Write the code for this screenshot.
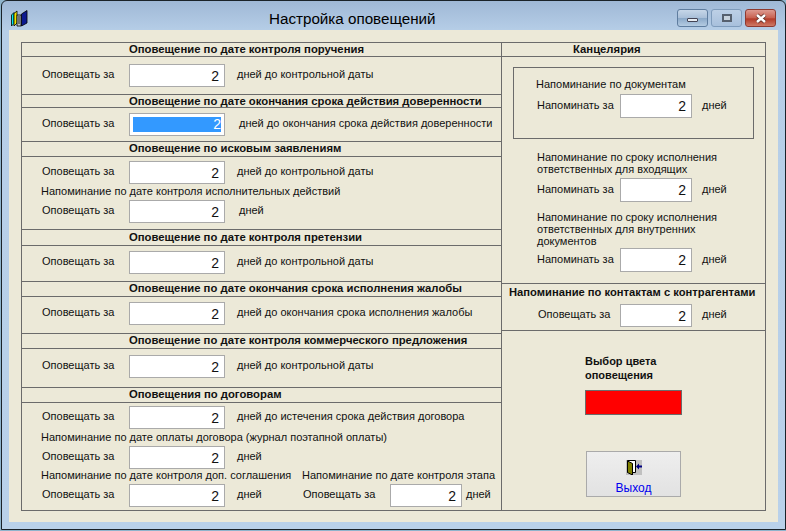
<div class="win">
  <div class="titlebar">
    <svg class="appicon" width="17" height="17" viewBox="0 0 17 17">
      <path d="M.5 5 3 2.500v11L.5 16z" fill="#00e8f0" stroke="#000" stroke-width=".8"/>
      <path d="M3 3.500 6 1v12l-3 3z" fill="#f0e400" stroke="#000" stroke-width=".8"/>
      <path d="M6 5h4v11H6z" fill="#b8c4c8" stroke="#000" stroke-width=".8"/>
      <path d="M7 7h2M7 9h2M7 11h2M7 13h2" stroke="#222" stroke-width="1"/>
      <path d="M10.500 4 16 .5v12.500l-5.500 3z" fill="#0c1a90" stroke="#000" stroke-width=".8"/>
    </svg>
    <div class="title">Настройка оповещений</div>
    <div class="controls">
      <div class="cb"><span class="min"></span></div>
      <div class="cb faint"><span class="max"></span></div>
      <div class="cb close">
        <svg width="14" height="11" viewBox="0 0 14 11"><path d="M3 2 11 9M11 2 3 9" stroke="#5a2a22" stroke-width="4"/><path d="M3 2 11 9M11 2 3 9" stroke="#fff" stroke-width="2.600"/></svg>
      </div>
    </div>
  </div>
  <div class="client">
    <div class="frame">
      <div class="left">
        <h4 class="h hh14">Оповещение по дате контроля поручения</h4>
        <div class="sec s1">
          <div class="row"><span class="lab">Оповещать за</span><span class="inp">2</span><span class="aft">дней до контрольной даты</span></div>
        </div>
        <h4 class="h">Оповещение по дате окончания срока действия доверенности</h4>
        <div class="sec s2">
          <div class="row"><span class="lab">Оповещать за</span><span class="inp sel"><b>2</b></span><span class="aft a2">дней до окончания срока действия доверенности</span></div>
        </div>
        <h4 class="h hh15">Оповещение по исковым заявлениям</h4>
        <div class="sec s3">
          <div class="row"><span class="lab">Оповещать за</span><span class="inp">2</span><span class="aft">дней до контрольной даты</span></div>
          <div class="note">Напоминание по дате контроля исполнительных действий</div>
          <div class="row"><span class="lab">Оповещать за</span><span class="inp">2</span><span class="aft a2">дней</span></div>
        </div>
        <h4 class="h hh16">Оповещение по дате контроля претензии</h4>
        <div class="sec s4">
          <div class="row"><span class="lab">Оповещать за</span><span class="inp">2</span><span class="aft">дней до контрольной даты</span></div>
        </div>
        <h4 class="h hh15">Оповещение по дате окончания срока исполнения жалобы</h4>
        <div class="sec s5">
          <div class="row"><span class="lab">Оповещать за</span><span class="inp">2</span><span class="aft">дней до окончания срока исполнения жалобы</span></div>
        </div>
        <h4 class="h hh15">Оповещение по дате контроля коммерческого предложения</h4>
        <div class="sec s6">
          <div class="row"><span class="lab">Оповещать за</span><span class="inp">2</span><span class="aft">дней до контрольной даты</span></div>
        </div>
        <h4 class="h hh15">Оповещения по договорам</h4>
        <div class="sec s7">
          <div class="row"><span class="lab">Оповещать за</span><span class="inp">2</span><span class="aft">дней до истечения срока действия договора</span></div>
          <div class="note n17">Напоминание по дате оплаты договора (журнал поэтапной оплаты)</div>
          <div class="row"><span class="lab">Оповещать за</span><span class="inp">2</span><span class="aft">дней</span></div>
          <div class="note split"><span>Напоминание по дате контроля доп. соглашения</span><span>Напоминание по дате контроля этапа</span></div>
          <div class="row"><span class="lab">Оповещать за</span><span class="inp">2</span><span class="aft a3">дней</span><span class="lab2">Оповещать за</span><span class="inp i2">2</span><span class="aft a4">дней</span></div>
        </div>
      </div>
      <div class="right">
        <h4 class="rh">Канцелярия</h4>
        <div class="office">
          <div class="box">
            <div class="boxt">Напоминание по документам</div>
            <div class="rrow"><span class="rlab inbox">Напоминать за</span><span class="inp r">2</span><span class="raft">дней</span></div>
          </div>
          <div class="rt t1">Напоминание по сроку исполнения<br>ответственных для входящих</div>
          <div class="rrow"><span class="rlab">Напоминать за</span><span class="inp r">2</span><span class="raft">дней</span></div>
          <div class="rt t2">Напоминание по сроку исполнения<br>ответственных для внутренних<br>документов</div>
          <div class="rrow"><span class="rlab">Напоминать за</span><span class="inp r">2</span><span class="raft">дней</span></div>
        </div>
        <div class="contacts">
          <h4 class="rh2">Напоминание по контактам с контрагентами</h4>
          <div class="rrow"><span class="rlab wide">Оповещать за</span><span class="inp r r23">2</span><span class="raft">дней</span></div>
        </div>
        <div class="bottom">
          <div class="ct">Выбор цвета<br>оповещения</div>
          <div class="swatch"></div>
          <div class="exit">
            <svg width="16" height="15" viewBox="0 0 16 15">
              <rect width="16" height="15" fill="#c0c0c0"/>
              <path d="M1.500 12.500V.5h8v12H6" fill="#fff" stroke="#000"/>
              <path d="M1.500 1 6.500 3.500V15L1.500 12.500z" fill="#808000" stroke="#000"/>
              <path d="M10 6.500 13 3.500V5.500h3v2h-3v2z" fill="#000080"/>
            </svg>
            <span>Выход</span>
          </div>
        </div>
      </div>
    </div>
  </div>
</div>

<style>
  :global(body) { margin: 0; background: #8fb4cc; }
  .win { width: 785px; height: 530px; margin-left: 1px; box-sizing: border-box; overflow: hidden;
    border: 1px solid #1a2229; border-radius: 6px 6px 0 0;
    background: linear-gradient(180deg, #9fb8d6 0, #b6cee7 30px, #b9d1ea 100%); font-family: "Liberation Sans", Arial, sans-serif; color: #111; }
  .titlebar { height: 29px; display: flex; align-items: flex-start; }
  .appicon { margin: 9px 0 0 9px; flex: none; }
  .title { margin: 9px 0 0 241px; font-size: 15.200px; line-height: 18px; color: #000; white-space: nowrap; }
  .controls { margin: 8px 9px 0 auto; display: flex; gap: 3px; }
  .cb { width: 31px; height: 18px; box-sizing: border-box; border: 1px solid #5f7d9f; border-radius: 3px; display: flex; align-items: center; justify-content: center;
    background: linear-gradient(180deg, #c6d6e8 0, #a9bfd8 50%, #8ba9c8 52%, #b4cbe2 100%); }
  .faint { border-color: #7f9cbc; background: linear-gradient(180deg, #bdd0e6, #a8c0dc); }
  .close { background: linear-gradient(180deg, #dd9a90 0, #c8604f 50%, #b23a28 55%, #cf7a66 100%); border-color: #8f3a30; }
  .min { width: 11px; height: 4px; margin-top: 3px; background: #e8edf2; border: 1px solid #445; border-radius: 1px; box-sizing: border-box; }
  .max { width: 10px; height: 8px; border: 2px solid #56606e; background: #c8d2dc; box-sizing: border-box; }
  .client { margin-left: 7px; width: 769px; height: 492px; background: #ece9d8; box-sizing: border-box; padding: 12px 0 0 12px; }
  .frame { width: 745px; height: 469px; box-sizing: border-box; border: 1px solid #6b6b6b; display: flex; }
  .left { width: 480px; flex: none; box-sizing: border-box; border-right: 1px solid #6b6b6b; }
  .right { flex: 1; min-width: 0; display: flex; flex-direction: column; }
  .h { margin: 0; height: 13px; box-sizing: border-box; padding-left: 107px; font-size: 11.300px; font-weight: bold; line-height: 12px; border-bottom: 1px solid #6b6b6b; white-space: nowrap; }
  .hh14 { height: 14px; }
  .hh15 { height: 15px; line-height: 13px; }
  .hh16 { height: 16px; line-height: 15px; }
  .sec { box-sizing: border-box; border-bottom: 1px solid #6b6b6b; }
  .s1 { height: 38px; padding-top: 7px; }
  .s2 { height: 34px; padding-top: 5px; }
  .s3 { height: 73px; padding-top: 4px; }
  .s4 { height: 36px; padding-top: 5px; }
  .s5 { height: 37px; padding-top: 5px; }
  .s6 { height: 39px; padding-top: 6px; }
  .s7 { border-bottom: none; padding-top: 3px; }
  .row { display: flex; height: 23px; align-items: center; }
  .lab { width: 107px; flex: none; padding: 0 0 2px 20px; box-sizing: border-box; font-size: 11px; line-height: 13px; white-space: nowrap; }
  .lab2 { width: 87px; flex: none; font-size: 11px; line-height: 13px; padding-bottom: 2px; white-space: nowrap; }
  .inp { width: 96px; height: 23px; flex: none; box-sizing: border-box; background: #fff; border: 1px solid #aaa; text-align: right; font-size: 14px; line-height: 23px; padding-right: 5px; color: #111; }
  .inp.sel { padding: 3px; line-height: 15px; }
  .inp.sel b { display: block; height: 15px; background: #3399ff; color: #fff; font-weight: normal; }
  .i2 { width: 72px; }
  .aft { margin-left: 12px; font-size: 11px; line-height: 13px; padding-bottom: 2px; white-space: nowrap; }
  .a2 { margin-left: 14px; }
  .a3 { width: 66px; flex: none; }
  .a4 { margin-left: 4px; }
  .note { font-size: 11px; line-height: 13px; height: 16px; padding: 1px 0 0 19px; box-sizing: border-box; white-space: nowrap; }
  .n17 { height: 17px; padding-top: 2px; }
  .split { display: flex; height: 15px; padding-top: 0; }
  .split span:first-child { width: 261px; flex: none; }
  .rh { margin: 0; height: 14px; box-sizing: border-box; padding-left: 71px; font-size: 11.300px; line-height: 13px; border-bottom: 1px solid #6b6b6b; }
  .office { height: 227px; box-sizing: border-box; border-bottom: 1px solid #6b6b6b; padding: 10px 11px 0 11px; }
  .box { height: 72px; box-sizing: border-box; border: 1px solid #6b6b6b; padding-top: 10px; }
  .boxt { font-size: 11px; line-height: 13px; height: 16px; padding-left: 22px; }
  .rrow { display: flex; align-items: center; height: 24px; }
  .rlab { width: 107px; flex: none; font-size: 11px; line-height: 13px; padding: 0 0 2px 24px; box-sizing: border-box; white-space: nowrap; }
  .inbox { width: 106px; padding-left: 23px; }
  .wide { width: 118px; padding-left: 36px; }
  .inp.r { width: 72px; height: 24px; }
  .inp.r23 { height: 23px; }
  .raft { margin-left: 10px; font-size: 11px; line-height: 13px; padding-bottom: 2px; }
  .rt { font-size: 11px; line-height: 12px; padding-left: 24px; white-space: nowrap; }
  .t1 { margin-top: 12px; margin-bottom: 3px; }
  .t2 { margin-top: 9px; margin-bottom: 1px; }
  .contacts { height: 47px; box-sizing: border-box; border-bottom: 1px solid #6b6b6b; }
  .rh2 { margin: 0; height: 19px; box-sizing: border-box; padding: 2px 0 0 7px; font-size: 11.200px; line-height: 13px; white-space: nowrap; }
  .bottom { flex: 1; padding: 23px 0 0 83px; }
  .ct { font-size: 11px; font-weight: bold; line-height: 14px; }
  .swatch { width: 97px; height: 25px; box-sizing: border-box; background: #ff0000; border: 1px solid #6b6b6b; margin-top: 8px; }
  .exit { width: 95px; height: 46px; margin: 36px 0 0 1px; box-sizing: border-box; border: 1px solid #aaa; background: linear-gradient(180deg, #eeeeee, #e2e2e2); display: flex; flex-direction: column; align-items: center; padding-top: 8px; }
  .exit span { color: #0000ee; font-size: 12px; line-height: 14px; margin-top: 6px; }
</style>
